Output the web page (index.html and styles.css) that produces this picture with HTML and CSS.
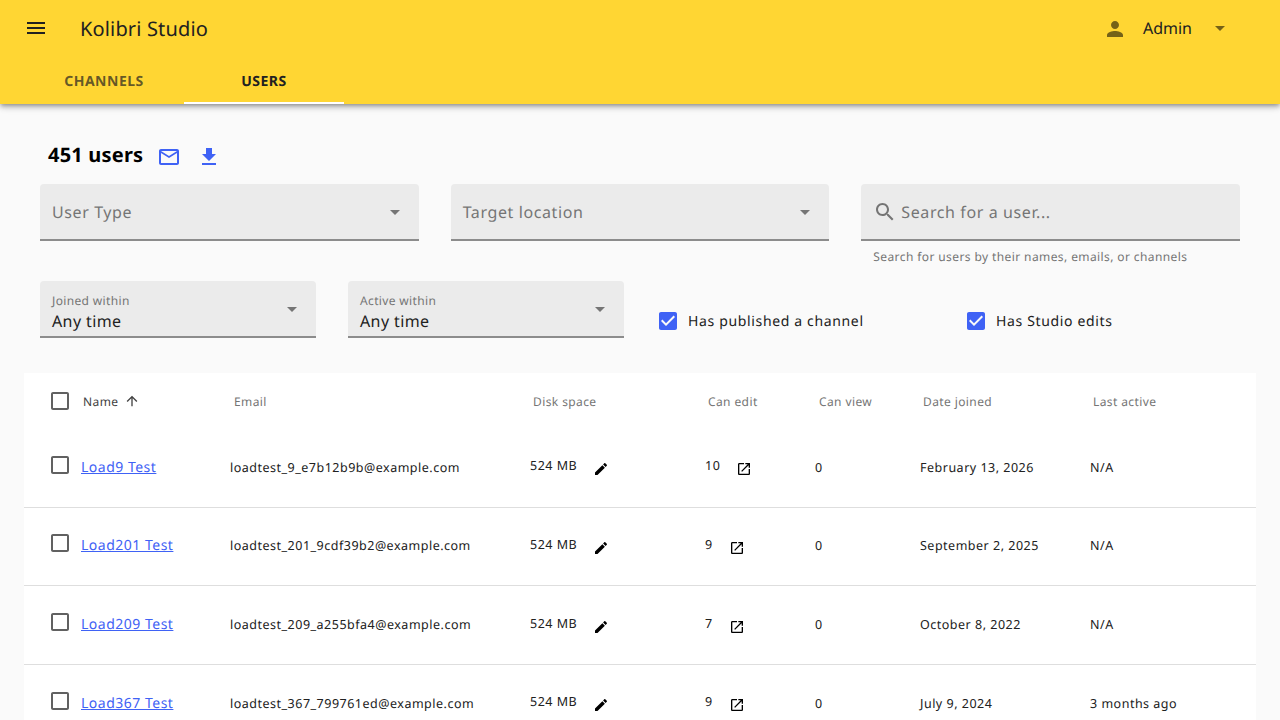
FILE: index.html
```html
<!DOCTYPE html>
<html lang="en">
<head>
  <meta charset="UTF-8" />
  <title>Users - Kolibri Studio</title>
  <link rel="stylesheet" href="styles.css">
</head>
<body>
  <svg class="icon-defs" aria-hidden="true">
    <symbol id="i-menu" viewBox="0 0 24 24"><path d="M3 18h18v-2H3v2zm0-5h18v-2H3v2zm0-7v2h18V6H3z"/></symbol>
    <symbol id="i-person" viewBox="0 0 24 24"><path d="M12 12c2.21 0 4-1.79 4-4s-1.79-4-4-4-4 1.79-4 4 1.79 4 4 4zm0 2c-2.67 0-8 1.34-8 4v2h16v-2c0-2.66-5.33-4-8-4z"/></symbol>
    <symbol id="i-drop" viewBox="0 0 24 24"><path d="M7 10l5 5 5-5z"/></symbol>
    <symbol id="i-mail" viewBox="0 0 24 24"><path d="M20 4H4c-1.1 0-1.99.9-1.99 2L2 18c0 1.1.9 2 2 2h16c1.1 0 2-.9 2-2V6c0-1.1-.9-2-2-2zm0 14H4V8l8 5 8-5v10zm-8-7L4 6h16l-8 5z"/></symbol>
    <symbol id="i-download" viewBox="0 0 24 24"><path d="M19 9h-4V3H9v6H5l7 7 7-7zM5 18v2h14v-2H5z"/></symbol>
    <symbol id="i-search" viewBox="0 0 24 24"><path d="M15.5 14h-.79l-.28-.27C15.41 12.59 16 11.11 16 9.5 16 5.91 13.09 3 9.5 3S3 5.91 3 9.5 5.91 16 9.5 16c1.61 0 3.09-.59 4.23-1.57l.27.28v.79l5 4.99L20.49 19l-4.99-5zm-6 0C7.01 14 5 11.99 5 9.5S7.01 5 9.5 5 14 7.01 14 9.5 11.99 14 9.5 14z"/></symbol>
    <symbol id="i-up" viewBox="0 0 24 24"><path d="M4 12l1.41 1.41L11 7.83V20h2V7.83l5.58 5.59L20 12l-8-8-8 8z"/></symbol>
    <symbol id="i-edit" viewBox="0 0 24 24"><path d="M3 17.25V21h3.75L17.81 9.94l-3.75-3.75L3 17.25zM20.71 7.04c.39-.39.39-1.02 0-1.41l-2.34-2.34c-.39-.39-1.02-.39-1.41 0l-1.83 1.83 3.75 3.75 1.83-1.83z"/></symbol>
    <symbol id="i-open" viewBox="0 0 24 24"><path d="M19 19H5V5h7V3H5c-1.11 0-2 .9-2 2v14c0 1.1.89 2 2 2h14c1.1 0 2-.9 2-2v-7h-2v7zM14 3v2h3.59l-9.83 9.83 1.41 1.41L19 6.41V10h2V3h-7z"/></symbol>
    <symbol id="i-box" viewBox="0 0 24 24"><path d="M19 5v14H5V5h14m0-2H5c-1.1 0-2 .9-2 2v14c0 1.1.9 2 2 2h14c1.1 0 2-.9 2-2V5c0-1.1-.9-2-2-2z"/></symbol>
    <symbol id="i-checked" viewBox="0 0 24 24"><path d="M19 3H5c-1.11 0-2 .9-2 2v14c0 1.1.89 2 2 2h14c1.11 0 2-.9 2-2V5c0-1.1-.89-2-2-2zm-9 14l-5-5 1.41-1.41L10 14.17l7.59-7.59L19 8l-9 9z"/></symbol>
  </svg>

  <header class="appbar">
    <div class="toolbar">
      <svg class="icon menu-icon"><use href="#i-menu"/></svg>
      <div class="app-title">Kolibri Studio</div>
      <div class="user-menu">
        <svg class="icon muted-icon person-icon"><use href="#i-person"/></svg>
        <span class="user-name">Admin</span>
        <svg class="icon muted-icon"><use href="#i-drop"/></svg>
      </div>
    </div>
    <nav class="tabs">
      <a href="#" class="tab">Channels</a>
      <a href="#" class="tab tab-active">Users</a>
    </nav>
  </header>

  <main class="content">
    <div class="count-row">
      <h1 class="count">451 users</h1>
      <svg class="icon blue-icon mail-icon"><use href="#i-mail"/></svg>
      <svg class="icon blue-icon download-icon"><use href="#i-download"/></svg>
    </div>

    <div class="filters">
      <div class="field">
        <span class="placeholder">User Type</span>
        <svg class="icon field-arrow"><use href="#i-drop"/></svg>
      </div>
      <div class="field">
        <span class="placeholder">Target location</span>
        <svg class="icon field-arrow"><use href="#i-drop"/></svg>
      </div>
      <div class="search-wrap">
        <div class="field field-search">
          <svg class="icon field-arrow"><use href="#i-search"/></svg>
          <span class="placeholder">Search for a user...</span>
        </div>
        <div class="hint">Search for users by their names, emails, or channels</div>
      </div>
    </div>

    <div class="filters-second">
      <div class="field field-small">
        <div class="select-text">
          <span class="small-label">Joined within</span>
          <span class="select-value">Any time</span>
        </div>
        <svg class="icon field-arrow"><use href="#i-drop"/></svg>
      </div>
      <div class="field field-small">
        <div class="select-text">
          <span class="small-label">Active within</span>
          <span class="select-value">Any time</span>
        </div>
        <svg class="icon field-arrow"><use href="#i-drop"/></svg>
      </div>
      <label class="check">
        <svg class="icon blue-icon"><use href="#i-checked"/></svg>
        Has published a channel
      </label>
      <label class="check">
        <svg class="icon blue-icon"><use href="#i-checked"/></svg>
        Has Studio edits
      </label>
    </div>

    <section class="table">
      <div class="row row-head">
        <div class="cell-check"><svg class="icon box-icon"><use href="#i-box"/></svg></div>
        <div class="head-name">Name <svg class="icon sort-icon"><use href="#i-up"/></svg></div>
        <div class="head-cell head-email">Email</div>
        <div class="head-cell">Disk space</div>
        <div class="head-cell">Can edit</div>
        <div class="head-cell head-view">Can view</div>
        <div class="head-cell">Date joined</div>
        <div class="head-cell">Last active</div>
      </div>

      <div class="row">
        <div class="cell-check"><svg class="icon box-icon"><use href="#i-box"/></svg></div>
        <div><a href="#" class="user-link">Load9 Test</a></div>
        <div>loadtest_9_e7b12b9b@example.com</div>
        <div class="with-icon"><span class="raised">524 MB</span><svg class="icon row-icon"><use href="#i-edit"/></svg></div>
        <div class="with-icon"><span class="raised">10</span><svg class="icon row-icon"><use href="#i-open"/></svg></div>
        <div>0</div>
        <div>February 13, 2026</div>
        <div>N/A</div>
      </div>

      <div class="row">
        <div class="cell-check"><svg class="icon box-icon"><use href="#i-box"/></svg></div>
        <div><a href="#" class="user-link">Load201 Test</a></div>
        <div>loadtest_201_9cdf39b2@example.com</div>
        <div class="with-icon"><span class="raised">524 MB</span><svg class="icon row-icon"><use href="#i-edit"/></svg></div>
        <div class="with-icon"><span class="raised">9</span><svg class="icon row-icon"><use href="#i-open"/></svg></div>
        <div>0</div>
        <div>September 2, 2025</div>
        <div>N/A</div>
      </div>

      <div class="row">
        <div class="cell-check"><svg class="icon box-icon"><use href="#i-box"/></svg></div>
        <div><a href="#" class="user-link">Load209 Test</a></div>
        <div>loadtest_209_a255bfa4@example.com</div>
        <div class="with-icon"><span class="raised">524 MB</span><svg class="icon row-icon"><use href="#i-edit"/></svg></div>
        <div class="with-icon"><span class="raised">7</span><svg class="icon row-icon"><use href="#i-open"/></svg></div>
        <div>0</div>
        <div>October 8, 2022</div>
        <div>N/A</div>
      </div>

      <div class="row">
        <div class="cell-check"><svg class="icon box-icon"><use href="#i-box"/></svg></div>
        <div><a href="#" class="user-link">Load367 Test</a></div>
        <div>loadtest_367_799761ed@example.com</div>
        <div class="with-icon"><span class="raised">524 MB</span><svg class="icon row-icon"><use href="#i-edit"/></svg></div>
        <div class="with-icon"><span class="raised">9</span><svg class="icon row-icon"><use href="#i-open"/></svg></div>
        <div>0</div>
        <div>July 9, 2024</div>
        <div>3 months ago</div>
      </div>
    </section>
  </main>
</body>
</html>
```

FILE: styles.css
```css
:root {
  --yellow: #ffd633;
  --blue: #3f62f5;
  --ink: #212121;
  --grey: #757575;
  --field: #ebebeb;
}

html,
body {
  height: 720px;
  overflow: hidden;
}

body {
  margin: 0;
  background-color: #fafafa;
  color: var(--ink);
  font-family: "Noto Sans", sans-serif;
  text-rendering: geometricPrecision;
}

.icon-defs {
  display: none;
}

.icon {
  width: 24px;
  height: 24px;
  fill: currentColor;
  flex: none;
  display: block;
}

/* app bar */
.appbar {
  height: 104px;
  background-color: var(--yellow);
  box-shadow: 0 2px 4px -1px rgba(0, 0, 0, 0.3), 0 4px 5px rgba(0, 0, 0, 0.14), 0 1px 10px rgba(0, 0, 0, 0.12);
}

.toolbar {
  height: 56px;
  display: flex;
  align-items: center;
  padding: 0 48px 0 24px;
}

.app-title {
  margin-left: 32px;
  font-size: 20px;
  letter-spacing: 0.15px;
}

.user-menu {
  margin-left: auto;
  display: flex;
  align-items: center;
  font-size: 16px;
}

.user-name {
  margin: 0 16px;
}

.muted-icon {
  color: rgba(0, 0, 0, 0.54);
}

.person-icon {
  margin-top: 2px;
}

.tabs {
  display: flex;
  height: 48px;
  padding-left: 24px;
}

.tab {
  width: 160px;
  box-sizing: border-box;
  display: flex;
  align-items: center;
  justify-content: center;
  padding-top: 4px;
  border-bottom: 2px solid transparent;
  font-size: 14px;
  font-weight: 700;
  letter-spacing: 0.5px;
  text-transform: uppercase;
  text-decoration: none;
  color: rgba(33, 33, 33, 0.7);
}

.tab-active {
  color: var(--ink);
  border-bottom-color: #fff;
}

/* filters */
.content {
  padding: 0 24px;
}

.count-row {
  height: 80px;
  box-sizing: border-box;
  padding: 21px 0 0 24px;
  display: flex;
  align-items: center;
}

.count {
  margin: 0;
  font-size: 20px;
  font-weight: 700;
  letter-spacing: 0.2px;
  color: #000;
}

.blue-icon {
  color: var(--blue);
}

.mail-icon {
  margin: 5px 0 0 14px;
}

.download-icon {
  margin: 5px 0 0 16px;
}

.filters {
  display: grid;
  grid-template-columns: repeat(3, 1fr);
  gap: 32px;
  padding: 0 16px;
  height: 97px;
}

.field {
  height: 55px;
  display: flex;
  align-items: center;
  justify-content: space-between;
  padding: 0 12px;
  background-color: var(--field);
  border-bottom: 2px solid #8c8c8c;
  border-radius: 4px 4px 0 0;
  color: var(--grey);
}

.placeholder {
  font-size: 16px;
  letter-spacing: 0.6px;
}

.field-search {
  justify-content: flex-start;
  gap: 4px;
}

.hint {
  padding: 7px 12px 0;
  font-size: 12px;
  letter-spacing: 0.4px;
  color: var(--grey);
}

.filters-second {
  display: grid;
  grid-template-columns: repeat(4, 1fr);
  height: 92px;
}

.field-small {
  margin: 0 16px;
}

.select-text {
  display: flex;
  flex-direction: column;
}

.small-label {
  font-size: 12px;
  line-height: 16px;
  letter-spacing: 0.35px;
  margin-top: 9px;
}

.select-value {
  font-size: 16px;
  line-height: 24px;
  letter-spacing: 0.4px;
  color: var(--ink);
}

.check {
  display: flex;
  align-items: center;
  gap: 8px;
  height: 80px;
  padding-left: 16px;
  box-sizing: border-box;
  font-size: 14px;
  letter-spacing: 0.65px;
  color: var(--ink);
}

/* table */
.table {
  background-color: #fff;
  font-size: 12.5px;
  letter-spacing: 0.5px;
}

.row {
  display: grid;
  grid-template-columns: 57px 149px 300px 175px 110px 105px 170px 1fr;
  align-items: center;
  height: 78.67px;
  box-sizing: border-box;
  padding-bottom: 1px;
  border-bottom: 1px solid #dedede;
}

.row-head {
  height: 56px;
  padding-bottom: 0;
  border-bottom: none;
  font-size: 12px;
  letter-spacing: 0.4px;
  color: var(--grey);
}

.cell-check {
  padding-left: 24px;
  margin-top: -5px;
}

.row-head .cell-check {
  margin-top: 0;
}

.box-icon {
  color: #616161;
}

.head-name {
  display: flex;
  align-items: center;
  gap: 6px;
  padding-left: 2px;
  color: #424242;
}

.sort-icon {
  width: 16px;
  height: 16px;
}

.head-cell {
  padding-left: 3px;
}

.head-email,
.head-view {
  padding-left: 4px;
}

.user-link {
  font-size: 14px;
  color: var(--blue);
}

.with-icon {
  display: flex;
  align-items: center;
}

.raised {
  margin-top: -3px;
}

.row-icon {
  width: 16px;
  height: 16px;
  margin: 4px 0 0 16px;
  color: #000;
}
```
